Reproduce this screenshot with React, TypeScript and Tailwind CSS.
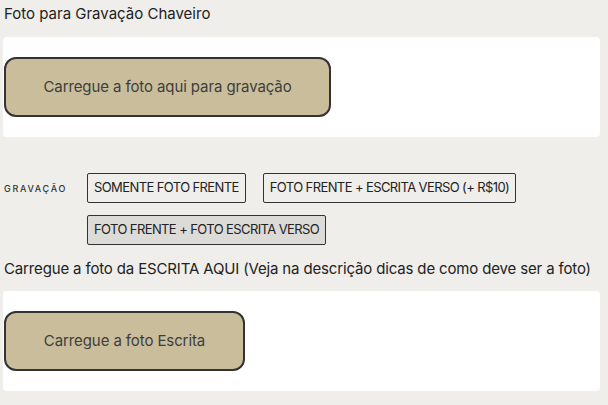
import React, { useState } from 'react';

const options = [
  'SOMENTE FOTO FRENTE',
  'FOTO FRENTE + ESCRITA VERSO (+ R$10)',
  'FOTO FRENTE + FOTO ESCRITA VERSO',
];

const UploadBox: React.FC<{ label: string; width: string }> = ({ label, width }) => (
  <div className="ml-[3px] w-[597px] h-[100px] bg-white rounded-[4px] pt-[20px] pl-[1px]">
    <button
      className={`${width} h-[60px] bg-[#cabd9b] border-2 border-[#333333] rounded-[12px] text-[15px] text-[#3d3d3d] tracking-[-0.1px]`}
    >
      {label}
    </button>
  </div>
);

export default function App() {
  const [selected, setSelected] = useState(2);

  return (
    <div
      className="w-[608px] h-[405px] bg-[#efeeea] overflow-hidden text-[#222]"
      style={{ fontFamily: 'Inter, "Noto Sans", sans-serif' }}
    >
      <div className="pl-[4px] pt-[4px] h-[37px] text-[15px] leading-[20px] tracking-[0px]">
        Foto para Gravação Chaveiro
      </div>

      <UploadBox label="Carregue a foto aqui para gravação" width="w-[327px]" />

      <div className="flex mt-[36px] pl-[4px]">
        <div className="w-[83px] pt-[9px] text-[9px] tracking-[1.7px] text-[#333] font-medium">GRAVAÇÃO</div>
        <div className="flex flex-wrap gap-x-[17px] gap-y-[12px] w-[480px]">
          {options.map((o, i) => (
            <button
              key={o}
              onClick={() => setSelected(i)}
              className={`h-[30px] px-[6px] border border-[#333] rounded-[2px] text-[13px] tracking-[-0.6px] text-[#222] ${
                selected === i ? 'bg-[#dcdbd8]' : 'bg-transparent'
              }`}
            >
              {o}
            </button>
          ))}
        </div>
      </div>

      <div className="pl-[4px] pt-[14px] h-[46px] text-[15px] leading-[20px] tracking-[-0.15px]">
        Carregue a foto da ESCRITA AQUI (Veja na descrição dicas de como deve ser a foto)
      </div>

      <UploadBox label="Carregue a foto Escrita" width="w-[241px]" />
    </div>
  );
}
